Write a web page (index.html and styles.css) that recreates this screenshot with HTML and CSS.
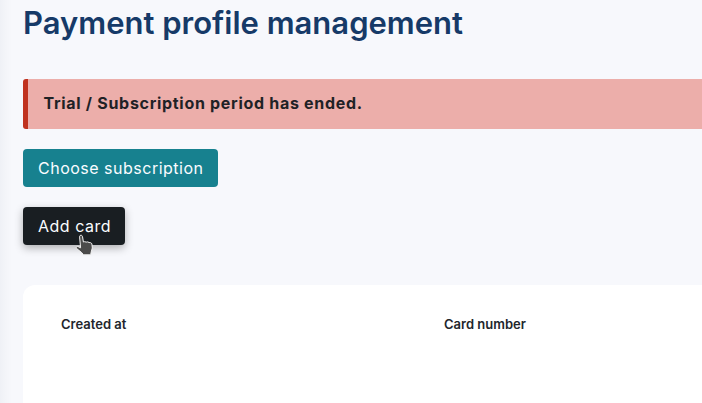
FILE: index.html
```html
<!DOCTYPE html>
<html lang="en">
<head>
<meta charset="utf-8">
<title>Payment profile management</title>
<link rel="stylesheet" href="styles.css">
</head>
<body>
<main class="page">
  <h1 class="title">Payment profile management</h1>
  <div class="alert">Trial / Subscription period has ended.</div>
  <div class="actions">
    <button class="btn btn-teal" type="button">Choose subscription</button>
    <button class="btn btn-dark" type="button">Add card
      <svg class="cursor" width="20" height="24" viewBox="0 0 20 24" aria-hidden="true">
        <path d="M5 1.6c1-.8 2.300-.2 2.500 1L8.400 8l1.300-.3 1.500.4 1.500-.2 1.400.6 1.500.2 1.300 1 .4 4.300-1.200 4.300-.4 2.500H8.500L6.700 18.600 1.700 14.600c-.9-1-.3-2.300 1-2.200l2.900 1.400L4.600 3.100c-.1-.6 0-1.100.4-1.500z" fill="#4b4b4b" stroke="#f2f2f2" stroke-width="1"/>
      </svg>
    </button>
  </div>
  <section class="card">
    <div class="card-head">
      <span class="col">Created at</span>
      <span class="col">Card number</span>
    </div>
  </section>
</main>
</body>
</html>
```
FILE: styles.css
```css
* { box-sizing: border-box; }
html, body { margin: 0; height: 100%; overflow: hidden; }
body {
  width: 702px;
  height: 403px;
  background: linear-gradient(90deg, #eff1f6 0, #f4f5f9 6px, #f7f8fc 12px);
  font-family: Inter, "Liberation Sans", sans-serif;
}
.page {
  display: flex;
  flex-direction: column;
  align-items: flex-start;
  padding: 3px 0 0 23px;
}
.title {
  margin: 0 0 37px;
  height: 39px;
  font-size: 31px;
  line-height: 39px;
  font-weight: 600;
  color: #163a68;
  white-space: nowrap;
}
.alert {
  width: 700px;
  height: 50px;
  display: flex;
  align-items: center;
  padding: 0 0 2px 15.500px;
  background: #ecaeaa;
  border-left: 5px solid #c0321f;
  border-radius: 3px 0 0 3px;
  font-size: 16px;
  font-weight: 700;
  letter-spacing: 0.700px;
  color: #1f2226;
}
.actions {
  display: flex;
  flex-direction: column;
  align-items: flex-start;
  gap: 20px;
  margin-top: 20px;
}
.btn {
  position: relative;
  height: 38px;
  padding: 0 15px;
  border: 0;
  border-radius: 4px;
  font-family: inherit;
  font-size: 16px;
  font-weight: 400;
  letter-spacing: 0.500px;
  white-space: nowrap;
  text-align: left;
  color: #fafcff;
}
.btn-teal { width: 195px; background: #17818f; }
.btn-dark {
  width: 102px;
  background: #191e22;
  box-shadow: 0 3px 8px rgba(0, 0, 0, 0.300);
}
.cursor {
  position: absolute;
  left: 52px;
  top: 27px;
}
.card {
  width: 700px;
  height: 130px;
  margin-top: 40px;
  padding: 31px 38px 0;
  background: #fff;
  border-radius: 12px 0 0 12px;
}
.card-head {
  display: grid;
  grid-template-columns: 383px 1fr;
}
.col {
  font-size: 13px;
  line-height: 16px;
  font-weight: 600;
  color: #22262c;
}
```
